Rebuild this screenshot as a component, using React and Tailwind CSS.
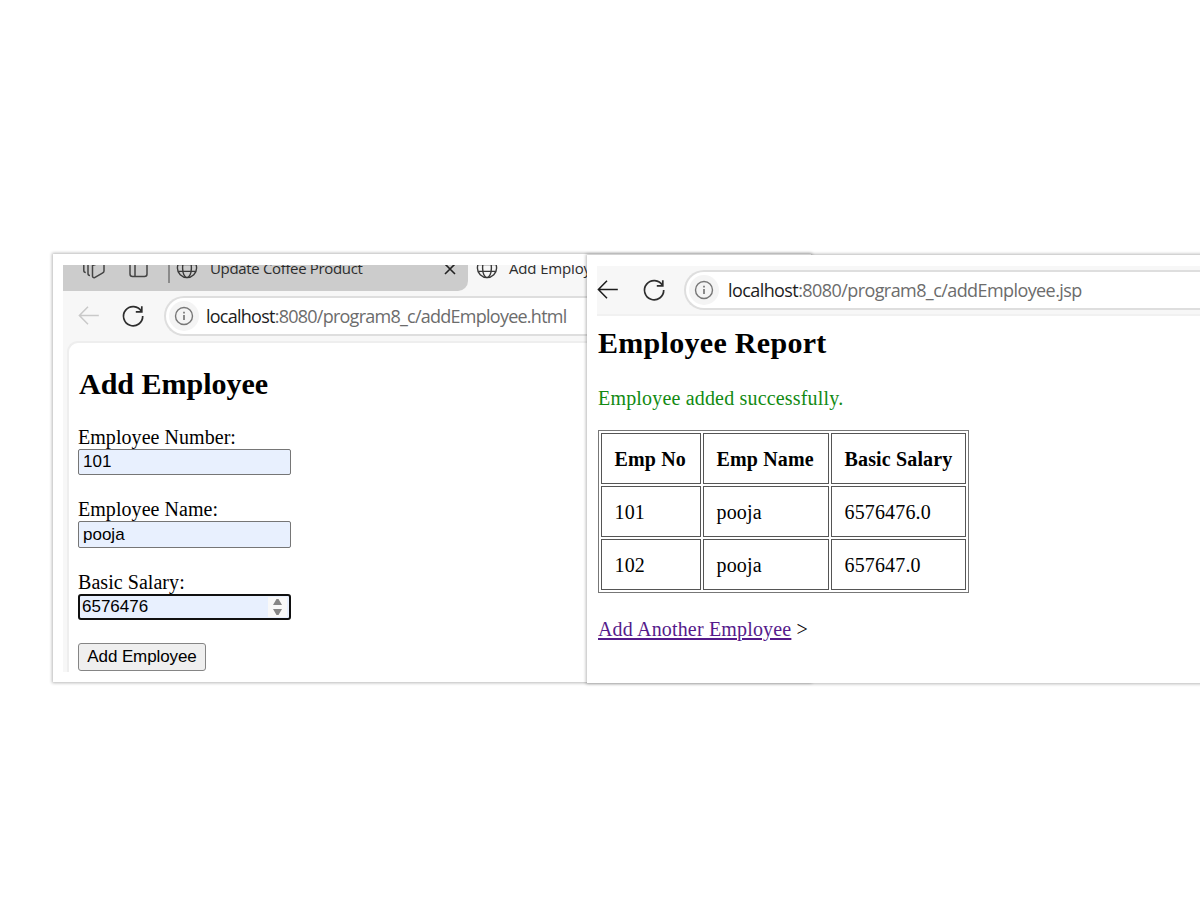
import React from "react";

const UI = "font-['Open_Sans','Noto_Sans',sans-serif]";

function Globe() {
  return (
    <svg width="22" height="22" viewBox="0 0 22 22" fill="none" stroke="#3a3a3a" strokeWidth="1.4" className="shrink-0">
      <circle cx="11" cy="11" r="9.6" />
      <ellipse cx="11" cy="11" rx="4.4" ry="9.6" />
      <path d="M2.3 7.6h17.4M2.3 14.4h17.4" />
    </svg>
  );
}

function Back({ color }) {
  return (
    <svg width="22" height="20" viewBox="0 0 22 20" fill="none" stroke={color} strokeWidth="1.5" className="shrink-0">
      <path d="M20.8 9.5H1.6M10 0.7L1.4 9.5l8.6 8.8" />
    </svg>
  );
}

function Reload() {
  return (
    <svg width="24" height="24" viewBox="0 0 24 24" fill="none" stroke="#2e2e2e" strokeWidth="1.7" className="shrink-0">
      <path d="M20.4 7.4A9.6 9.6 0 1 0 21.7 12" />
      <path d="M20.8 2.2v5.6h-6" />
    </svg>
  );
}

function Info() {
  return (
    <span className="flex h-[30px] w-[30px] shrink-0 items-center justify-center rounded-full bg-[#f4f4f4]">
      <svg width="20" height="20" viewBox="0 0 20 20" fill="none" stroke="#777" strokeWidth="1.4">
        <circle cx="10" cy="10" r="8.5" />
        <path d="M10 9v5M10 5.8v1.8" strokeWidth="1.7" />
      </svg>
    </span>
  );
}

function Address({ path, textClass }) {
  return (
    <div className="flex h-[40px] min-w-0 flex-1 items-center rounded-l-full border-2 border-r-0 border-[#dedede] bg-white pl-[3px]">
      <Info />
      <span className={`whitespace-nowrap text-[18px] leading-[24px] text-[#6c6c6c] ${UI} ${textClass}`}>
        <span className="text-[#1c1c1c]">localhost</span>:8080{path}
      </span>
    </div>
  );
}

function Field({ label, className, children }) {
  return (
    <div className={`flex flex-col ${className}`}>
      <span className="h-[22px] whitespace-nowrap text-[20px] leading-[21px] tracking-[0.05px]">{label}</span>
      {children}
    </div>
  );
}

function FormWindow() {
  return (
    <section className="absolute left-[53px] top-[254px] h-[428px] w-[758px] bg-white pl-[10px] pt-[11px] shadow-[0_0_3px_1px_rgba(0,0,0,0.28)]">
      <div className="flex h-[407px] flex-col overflow-hidden bg-[#f7f7f7]">
        <div className={`flex h-[26px] shrink-0 overflow-hidden text-[15px] text-[#2c2c2c] ${UI}`}>
          <div className="h-[26px] w-[405px] overflow-hidden rounded-br-[10px] bg-[#ccc]">
            <div className="-mt-[17px] flex h-[40px] items-center pl-[19px]">
              <svg width="24" height="22" viewBox="0 0 24 22" fill="none" stroke="#444" strokeWidth="1.5" strokeLinejoin="round">
                <path d="M10.5 8.5L20 5.2a1.5 1.5 0 0 1 2 1.4V14a2 2 0 0 1-1.2 1.8L12.6 20.6a1.5 1.5 0 0 1-2.1-1.4z" />
                <path d="M6 3v13.5a2 2 0 0 0 2 2M1.8 2v11.5a2 2 0 0 0 2 2" />
              </svg>
              <svg width="20" height="20" viewBox="0 0 20 20" fill="none" stroke="#444" strokeWidth="1.5" className="ml-[23px]">
                <rect x="1" y="1" width="17" height="17.5" rx="2.5" />
                <path d="M6 1v17M6 5h12" />
              </svg>
              <span className="ml-[19px] h-[30px] w-[2px] bg-[#8b8b8b]" />
              <span className="ml-[6px] flex"><Globe /></span>
              <span className="ml-[12px] w-[230px] whitespace-nowrap tracking-[-0.34px]">Update Coffee Product</span>
              <svg width="14" height="14" viewBox="0 0 14 14" stroke="#222" strokeWidth="1.6" className="ml-[3px] mt-[2px]">
                <path d="M2 2l10 10M12 2L2 12" />
              </svg>
            </div>
          </div>
          <div className="-mt-[17px] flex h-[40px] items-center pl-[8px]">
            <Globe />
            <span className="ml-[11px] whitespace-nowrap tracking-[-0.15px]">Add Employee</span>
          </div>
        </div>
        <div className="flex h-[50px] shrink-0 items-center pl-[15px]">
          <Back color="#c9c9c9" />
          <span className="ml-[21px] mr-[19px] flex"><Reload /></span>
          <Address path="/program8_c/addEmployee.html" textClass="ml-[7px] tracking-[-0.75px]" />
        </div>
        <div className="ml-[4px] flex-1 rounded-tl-[11px] border-l-2 border-t-2 border-[#eee] bg-white pl-[9px] font-['Liberation_Serif',serif] text-black">
          <h2 className="mt-[23px] h-[61px] whitespace-nowrap pl-px text-[30px] font-bold leading-[35px]">Add Employee</h2>
          <Field label="Employee Number:" className="h-[72px]">
            <div className="flex h-[26px] w-[213px] items-center rounded-[2px] border border-[#767676] bg-[#e8f0fe] pb-px pl-[4px] font-['Liberation_Sans',sans-serif] text-[17px]">101</div>
          </Field>
          <Field label="Employee Name:" className="h-[73px]">
            <div className="flex h-[27px] w-[213px] items-center rounded-[2px] border border-[#767676] bg-[#e8f0fe] pl-[4px] font-['Liberation_Sans',sans-serif] text-[17px] leading-[24px]">pooja</div>
          </Field>
          <Field label="Basic Salary:" className="h-[71px]">
            <div className="flex h-[26px] w-[213px] items-center justify-between rounded-[3px] border-2 border-[#101010] bg-[#e8f0fe] pl-[2px] pr-[2px] font-['Liberation_Sans',sans-serif] text-[17px] leading-[22px]">
              6576476
              <span className="flex h-[20px] w-[19px] items-center justify-center bg-[#f8f8f8]">
                <svg width="9" height="16" viewBox="0 0 9 16" fill="#868686">
                  <path d="M0 6L3.5 0h2L9 6zM0 10h9l-3.5 6h-2z" />
                </svg>
              </span>
            </div>
          </Field>
          <button className="flex h-[28px] w-[128px] items-center justify-center whitespace-nowrap rounded-[3px] border border-[#858585] bg-[#efefef] font-['Liberation_Sans',sans-serif] text-[17px] tracking-[-0.1px]">Add Employee</button>
        </div>
      </div>
    </section>
  );
}

const rows = [["101", "pooja", "6576476.0"], ["102", "pooja", "657647.0"]];

function ReportWindow() {
  const cell = "h-[51px] border border-[#555] py-0 pl-[12.5px] pr-0 text-left";
  return (
    <section className="absolute left-[587px] top-[255px] h-[428px] w-[640px] bg-white pl-[10px] pt-[11px] font-['Liberation_Serif',serif] text-black shadow-[0_0_3px_1px_rgba(0,0,0,0.28)]">
      <div className="flex h-[50px] items-center border-b-2 border-[#f1f1f1] bg-[#f7f7f7]">
        <Back color="#1c1c1c" />
        <span className="ml-[23px] mr-[18px] flex"><Reload /></span>
        <Address path="/program8_c/addEmployee.jsp" textClass="ml-[9px] -mt-px tracking-[-0.58px]" />
      </div>
      <h2 className="ml-px mt-[9px] whitespace-nowrap text-[30px] font-bold leading-[35px] tracking-[0.3px]">Employee Report</h2>
      <p className="ml-px mt-[26px] whitespace-nowrap text-[20px] leading-[24px] tracking-[0.18px] text-[#128a12]">Employee added successfully.</p>
      <table className="ml-px mt-[20px] w-[371px] table-fixed border-separate border-spacing-[2px] border border-[#777] text-[20px] leading-[24px] tracking-[0.15px]">
        <colgroup>
          <col className="w-[100px]" />
          <col className="w-[126px]" />
          <col />
        </colgroup>
        <thead>
          <tr>
            {["Emp No", "Emp Name", "Basic Salary"].map((t) => (
              <th key={t} className={cell}>{t}</th>
            ))}
          </tr>
        </thead>
        <tbody>
          {rows.map((r) => (
            <tr key={r[0]}>
              {r.map((c) => (
                <td key={c} className={cell}>{c}</td>
              ))}
            </tr>
          ))}
        </tbody>
      </table>
      <p className="ml-px mt-[24px] whitespace-nowrap text-[20px] leading-[24px] tracking-[0.17px]">
        <a className="text-[#551a8b] underline decoration-[1.5px] underline-offset-2">Add Another Employee</a> &gt;
      </p>
    </section>
  );
}

export default function App() {
  return (
    <main className="relative h-[900px] w-[1200px] overflow-hidden bg-white">
      <FormWindow />
      <ReportWindow />
    </main>
  );
}
